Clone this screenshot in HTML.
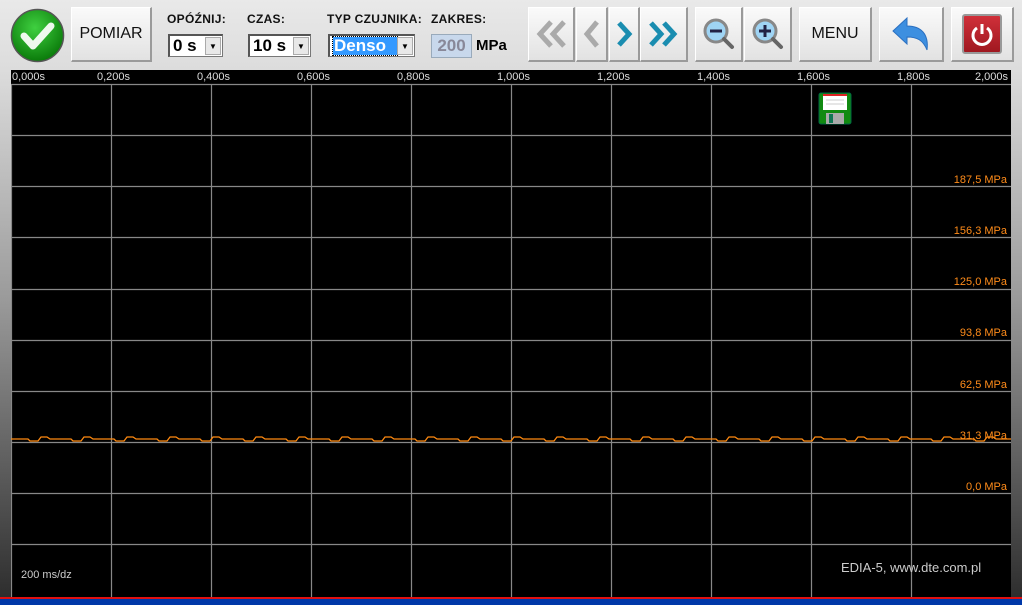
<!DOCTYPE html>
<html><head><meta charset="utf-8"><style>
*{margin:0;padding:0;box-sizing:border-box}
body{width:1022px;height:605px;overflow:hidden;position:relative;font-family:"Liberation Sans",sans-serif;background:linear-gradient(#e9e9e9 0px,#dcdcdc 70px,#9a9a9a 300px,#2e2e2e 597px)}
.btn{position:absolute;top:7px;height:55px;background:linear-gradient(#fafafa,#e2e2e2);border:1px solid #fff;border-right:2px solid #9a9a9a;border-bottom:2px solid #9a9a9a;display:flex;align-items:center;justify-content:center;font-size:16px;color:#111}
.lbl{position:absolute;top:12px;font-size:12px;font-weight:bold;color:#111;font-family:"Liberation Sans",sans-serif;letter-spacing:0.3px}
.sel{position:absolute;top:34px;height:23px;background:#fff;border:1px solid #777;border-top:2px solid #555;border-left:2px solid #555;font-weight:bold;font-size:17px;font-family:"Liberation Sans",sans-serif;padding-left:3px;line-height:20px}
.sel .ar{position:absolute;right:1px;top:1px;width:16px;height:18px;background:#e8e8e8;border:1px solid #aaa;font-size:8px;line-height:17px;text-align:center}
#plot{position:absolute;left:11px;top:70px;width:1000px;height:528px;background:#000}
.tl{position:absolute;top:1px;font-size:11px;color:#ddd}
.yl{position:absolute;right:4px;font-size:11px;color:#ff8c1a}
</style></head><body>
<svg style="position:absolute;left:10px;top:8px" width="55" height="55" viewBox="0 0 55 55">
<defs><radialGradient id="g" cx="45%" cy="35%" r="65%"><stop offset="0" stop-color="#3fd040"/><stop offset="1" stop-color="#0a7a0a"/></radialGradient></defs>
<circle cx="27.5" cy="27.5" r="26" fill="url(#g)" stroke="#555" stroke-width="1.5"/>
<path d="M14 28 L23 38 L41 18" fill="none" stroke="#fff" stroke-width="7" stroke-linecap="round" stroke-linejoin="round" opacity="0.92"/>
</svg>
<div class="btn" style="left:71px;width:81px">POMIAR</div>
<div class="lbl" style="left:167px">OPÓŹNIJ:</div>
<div class="lbl" style="left:247px">CZAS:</div>
<div class="lbl" style="left:327px">TYP CZUJNIKA:</div>
<div class="lbl" style="left:431px">ZAKRES:</div>
<div class="sel" style="left:168px;width:55px">0 s<div class="ar">▼</div></div>
<div class="sel" style="left:248px;width:63px">10 s<div class="ar">▼</div></div>
<div class="sel" style="left:328px;width:87px"><span style="background:#3399ff;color:#fff;outline:1px dotted #000;display:inline-block;width:64px;line-height:18px;padding-left:1px">Denso</span><div class="ar">▼</div></div>
<div style="position:absolute;left:431px;top:34px;width:41px;height:24px;background:#c8d8ec;border:1px solid #9ab;color:#889;font-weight:bold;font-size:17px;text-align:center;line-height:22px">200</div>
<div style="position:absolute;left:476px;top:37px;font-weight:bold;font-size:15px">MPa</div>
<div class="btn" style="left:528px;width:47px"><svg width="34" height="30"><path d="M17 3 L6 15 L17 27 M30 3 L19 15 L30 27" fill="none" stroke="#aaa" stroke-width="5"/></svg></div>
<div class="btn" style="left:576px;width:32px"><svg width="20" height="30"><path d="M15 3 L5 15 L15 27" fill="none" stroke="#aaa" stroke-width="5"/></svg></div>
<div class="btn" style="left:609px;width:31px"><svg width="20" height="30"><path d="M5 4 L15 15 L5 26" fill="none" stroke="#1a8db0" stroke-width="5"/></svg></div>
<div class="btn" style="left:640px;width:48px"><svg width="34" height="30"><path d="M4 4 L14 15 L4 26 M17 4 L27 15 L17 26" fill="none" stroke="#1a8db0" stroke-width="5"/></svg></div>
<div class="btn" style="left:695px;width:48px"><svg width="36" height="36"><circle cx="15" cy="15" r="11" fill="#9fd4f4" stroke="#888" stroke-width="3"/><path d="M9 15h12" stroke="#224" stroke-width="3"/><path d="M23 23 L31 31" stroke="#666" stroke-width="4" stroke-linecap="round"/></svg></div>
<div class="btn" style="left:744px;width:48px"><svg width="36" height="36"><circle cx="15" cy="15" r="11" fill="#9fd4f4" stroke="#888" stroke-width="3"/><path d="M9 15h12M15 9v12" stroke="#224" stroke-width="3"/><path d="M23 23 L31 31" stroke="#666" stroke-width="4" stroke-linecap="round"/></svg></div>
<div class="btn" style="left:799px;width:73px">MENU</div>
<div class="btn" style="left:879px;width:65px"><svg width="40" height="36"><path d="M2 15 L16 2 V10 C30 10 38 18 36 34 C32 24 26 21 16 21 V28 Z" fill="#3d8fe0" stroke="#2a6fc0"/></svg></div>
<div class="btn" style="left:951px;width:63px"><div style="width:40px;height:40px;background:linear-gradient(#d0303a,#a01820);border:2px solid #999;border-radius:3px;display:flex;align-items:center;justify-content:center"><svg width="26" height="26"><path d="M8 7 A9 9 0 1 0 18 7" fill="none" stroke="#fff" stroke-width="3"/><path d="M13 3v10" stroke="#fff" stroke-width="3"/></svg></div></div>
<div id="plot">
<svg width="1000" height="528" style="position:absolute;left:0;top:0">
<g stroke="#888" stroke-width="1.2">
<path d="M0 14.5H1000M0 65.5H1000M0 116.5H1000M0 167.5H1000M0 219.5H1000M0 270.5H1000M0 321.5H1000M0 372.5H1000M0 423.5H1000M0 474.5H1000"/>
<path d="M0.5 14V528M100.5 14V528M200.5 14V528M300.5 14V528M400.5 14V528M500.5 14V528M600.5 14V528M700.5 14V528M800.5 14V528M900.5 14V528"/>
</g>
<path d="M0 369 h17 l2 2 h8 l3 -4 h6 l3 2 h21 l2 2 h8 l3 -4 h6 l3 2 h21 l2 2 h8 l3 -4 h6 l3 2 h21 l2 2 h8 l3 -4 h6 l3 2 h21 l2 2 h8 l3 -4 h6 l3 2 h21 l2 2 h8 l3 -4 h6 l3 2 h21 l2 2 h8 l3 -4 h6 l3 2 h21 l2 2 h8 l3 -4 h6 l3 2 h21 l2 2 h8 l3 -4 h6 l3 2 h21 l2 2 h8 l3 -4 h6 l3 2 h21 l2 2 h8 l3 -4 h6 l3 2 h21 l2 2 h8 l3 -4 h6 l3 2 h21 l2 2 h8 l3 -4 h6 l3 2 h21 l2 2 h8 l3 -4 h6 l3 2 h21 l2 2 h8 l3 -4 h6 l3 2 h21 l2 2 h8 l3 -4 h6 l3 2 h21 l2 2 h8 l3 -4 h6 l3 2 h21 l2 2 h8 l3 -4 h6 l3 2 h21 l2 2 h8 l3 -4 h6 l3 2 h21 l2 2 h8 l3 -4 h6 l3 2 h21 l2 2 h8 l3 -4 h6 l3 2 h21 l2 2 h8 l3 -4 h6 l3 2 h21 l2 2 h8 l3 -4 h6 l3 2 h21 l2 2 h8 l3 -4 h6 l3 2 h21 l2 2 h8 l3 -4 h6 l3 2 h21" fill="none" stroke="#ff8a10" stroke-width="1.3"/>
<g transform="translate(808,23)"><rect x="0" y="0" width="32" height="31" rx="2" fill="#118a11" stroke="#064"/><rect x="4" y="1" width="24" height="16" fill="#fff"/><rect x="4" y="1" width="24" height="2" fill="#d22"/><path d="M7 7h18M7 11h18" stroke="#ccc"/><rect x="7" y="20" width="18" height="11" fill="#aaa"/><rect x="10" y="21" width="4" height="9" fill="#175"/></g>
</svg>
<div class="tl" style="left:1px">0,000s</div>
<div class="tl" style="left:86px">0,200s</div>
<div class="tl" style="left:186px">0,400s</div>
<div class="tl" style="left:286px">0,600s</div>
<div class="tl" style="left:386px">0,800s</div>
<div class="tl" style="left:486px">1,000s</div>
<div class="tl" style="left:586px">1,200s</div>
<div class="tl" style="left:686px">1,400s</div>
<div class="tl" style="left:786px">1,600s</div>
<div class="tl" style="left:886px">1,800s</div>
<div class="tl" style="right:3px">2,000s</div>
<div class="yl" style="top:104px">187,5 MPa</div>
<div class="yl" style="top:155px">156,3 MPa</div>
<div class="yl" style="top:206px">125,0 MPa</div>
<div class="yl" style="top:257px">93,8 MPa</div>
<div class="yl" style="top:309px">62,5 MPa</div>
<div class="yl" style="top:360px">31,3 MPa</div>
<div class="yl" style="top:411px">0,0 MPa</div>
<div style="position:absolute;left:10px;top:499px;font-size:11px;color:#ccc">200 ms/dz</div>
<div style="position:absolute;left:830px;top:490px;font-size:13px;color:#ccc">EDIA-5, www.dte.com.pl</div>
</div>
<div style="position:absolute;left:0;top:597px;width:1022px;height:2px;background:#e01010"></div>
<div style="position:absolute;left:0;top:599px;width:1022px;height:6px;background:#0038a8"></div>
</body></html>
